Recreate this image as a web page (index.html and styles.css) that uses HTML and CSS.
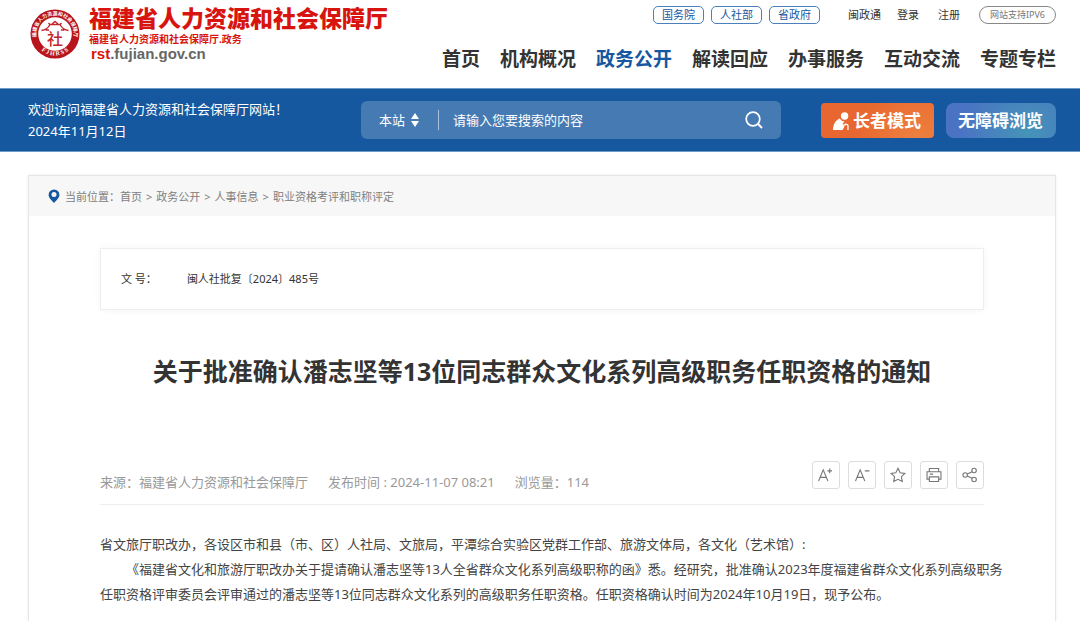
FILE: index.html
```html
<!DOCTYPE html>
<html lang="zh-CN">
<head>
    <meta charset="UTF-8">
    <meta name="viewport" content="width=device-width, initial-scale=1.0">
    <title>福建省人力资源和社会保障厅</title>
    <link rel="stylesheet" href="styles.css">
</head>
<body>
    <header class="header">
        <a class="logo" href="#">
            <svg class="logo-seal" viewBox="0 0 50 50" aria-hidden="true">
                <defs>
                    <path id="ringTop" d="M8.5 34A18.8 18.8 0 1 1 41.5 34"/>
                    <path id="ringBottom" d="M3.8 29A21.6 21.6 0 0 0 46.2 29"/>
                </defs>
                <circle cx="25" cy="25" r="24.5" fill="#b8141c"/>
                <circle cx="25" cy="25" r="16.8" fill="#fff"/>
                <text class="seal-ring"><textPath href="#ringTop" startOffset="50%" text-anchor="middle">福建省人力资源和社会保障厅</textPath></text>
                <text class="seal-latin"><textPath href="#ringBottom" startOffset="50%" text-anchor="middle">F J H R S S</textPath></text>
                <path d="M11.5 21.5Q17 21 20 15.5H30Q33 21 38.5 21.5M20 15.5L18.5 14M30 15.5L31.5 14M22 15L25 12.5L28 15M15.5 21H19M31 21H34.5" fill="none" stroke="#c0272d" stroke-width="1.4"/>
                <text class="seal-char" x="25" y="36" text-anchor="middle">社</text>
            </svg>
            <span class="logo-text">
                <span class="logo-name">福建省人力资源和社会保障厅</span>
                <span class="logo-sub">福建省人力资源和社会保障厅.政务</span>
                <span class="logo-url"><span class="red">rst</span>.fujian.gov.cn</span>
            </span>
        </a>
        <div class="header-right">
            <div class="top-links">
                <div class="gov-links">
                    <a href="#">国务院</a>
                    <a href="#">人社部</a>
                    <a href="#">省政府</a>
                </div>
                <a class="app-link" href="#">闽政通</a>
                <a class="login-link" href="#">登录</a>
                <a class="reg-link" href="#">注册</a>
                <span class="ipv6">网站支持IPV6</span>
            </div>
            <nav class="nav">
                <a href="#">首页</a>
                <a href="#">机构概况</a>
                <a class="active" href="#">政务公开</a>
                <a href="#">解读回应</a>
                <a href="#">办事服务</a>
                <a href="#">互动交流</a>
                <a href="#">专题专栏</a>
            </nav>
        </div>
    </header>

    <div class="banner">
        <div class="welcome">
            <p>欢迎访问福建省人力资源和社会保障厅网站！</p>
            <p>2024年11月12日</p>
        </div>
        <form class="search">
            <select class="search-scope" aria-label="搜索范围">
                <option>本站</option>
            </select>
            <svg class="sort-icon" viewBox="0 0 8 14" aria-hidden="true">
                <path d="M4 0L8 6H0ZM4 14L0 8H8Z" fill="#fff"/>
            </svg>
            <input class="search-input" type="text" placeholder="请输入您要搜索的内容" aria-label="搜索内容">
            <button class="search-btn" type="submit" aria-label="搜索">
                <svg viewBox="0 0 18 18" aria-hidden="true">
                    <circle cx="8" cy="8" r="6.8" fill="none" stroke="#fff" stroke-width="1.7"/>
                    <path d="M12.8 12.8L17 17" stroke="#fff" stroke-width="2"/>
                </svg>
            </button>
        </form>
        <div class="modes">
            <button class="mode elder" type="button">
                <svg viewBox="0 0 16 18" aria-hidden="true">
                    <circle cx="11.6" cy="4" r="3.7" fill="#fff"/>
                    <path d="M0 18C0 12.5 2.5 8 6.8 6.4C8 8.4 9.5 9.3 11.5 9.5L9.5 12L11.5 14.5L9.5 18Z" fill="#fff"/>
                    <path d="M9.5 13.3L13 12.6M11.8 12.2Q15 11.8 15 14V18" fill="none" stroke="#fff" stroke-width="1.3"/>
                </svg>
                长者模式
            </button>
            <button class="mode barrier-free" type="button">无障碍浏览</button>
        </div>
    </div>

    <main class="panel">
        <div class="breadcrumb">
            <svg class="pin" viewBox="0 0 12 14" aria-hidden="true">
                <path d="M6 0.5A5.4 5.4 0 0 1 11.4 6C11.4 9 8.5 11 6 14C3.5 11 0.6 9 0.6 6A5.4 5.4 0 0 1 6 0.5Z" fill="#16589f"/>
                <circle cx="6" cy="5.6" r="2.5" fill="#f7f7f7"/>
            </svg>
            <span>当前位置：</span>
            <a href="#">首页</a>
            <span class="sep">&gt;</span>
            <a href="#">政务公开</a>
            <span class="sep">&gt;</span>
            <a href="#">人事信息</a>
            <span class="sep">&gt;</span>
            <a href="#">职业资格考评和职称评定</a>
        </div>

        <article class="article">
            <dl class="doc-info">
                <dt>文 号：</dt>
                <dd>闽人社批复〔2024〕485号</dd>
            </dl>

            <h1>关于批准确认潘志坚等13位同志群众文化系列高级职务任职资格的通知</h1>

            <div class="meta">
                <div class="meta-text">
                    <span>来源：福建省人力资源和社会保障厅</span>
                    <span>发布时间 : 2024-11-07 08:21</span>
                    <span>浏览量：114</span>
                </div>
                <div class="tools">
                    <button type="button" aria-label="放大字号">
                        <svg viewBox="0 0 28 28"><path d="M6 20.5L11 8.5L16 20.5M7.8 16.5H14.2M15.5 9.5H20.5M18 7V12"/></svg>
                    </button>
                    <button type="button" aria-label="缩小字号">
                        <svg viewBox="0 0 28 28"><path d="M7 20.5L12 8.5L17 20.5M8.8 16.5H15.2M17 9.5H22"/></svg>
                    </button>
                    <button type="button" aria-label="收藏">
                        <svg viewBox="0 0 28 28"><path d="M14 6.8L16.3 11.5L21.4 12.2L17.7 15.8L18.6 21L14 18.6L9.4 21L10.3 15.8L6.6 12.2L11.7 11.5Z"/></svg>
                    </button>
                    <button type="button" aria-label="打印">
                        <svg viewBox="0 0 28 28"><path d="M9 10V7H19V10M9 18.5H6.5V10.5H21.5V18.5H19M9 16H19V21H9ZM9.5 13H13"/></svg>
                    </button>
                    <button type="button" aria-label="分享">
                        <svg viewBox="0 0 28 28"><circle cx="8.8" cy="14" r="2.4"/><circle cx="18.4" cy="9.2" r="2.4"/><circle cx="18.4" cy="18.8" r="2.4"/><path d="M11 13L16.2 10.4M11 15L16.2 17.6"/></svg>
                    </button>
                </div>
            </div>

            <div class="content">
                <p>省文旅厅职改办，各设区市和县（市、区）人社局、文旅局，平潭综合实验区党群工作部、旅游文体局，各文化（艺术馆）:</p>
                <p class="indent">《福建省文化和旅游厅职改办关于提请确认潘志坚等13人全省群众文化系列高级职称的函》悉。经研究，批准确认2023年度福建省群众文化系列高级职务<br>任职资格评审委员会评审通过的潘志坚等13位同志群众文化系列的高级职务任职资格。任职资格确认时间为2024年10月19日，现予公布。</p>
            </div>
        </article>
    </main>
</body>
</html>
```
FILE: styles.css
```css
* {
    box-sizing: border-box;
}
body {
    margin: 0;
    min-height: 100vh;
    display: flex;
    flex-direction: column;
    background-color: #fff;
    color: #333;
    font-family: "Noto Sans", "Noto Sans CJK SC", sans-serif;
    font-size: 13px;
}
a {
    color: inherit;
    text-decoration: none;
}
p, dl, dd {
    margin: 0;
}
button, input, select {
    font-family: inherit;
    padding: 0;
    border: none;
    background: none;
}
button {
    cursor: pointer;
}

/* header */
.header {
    display: flex;
    justify-content: space-between;
    padding: 0 24px 0 30px;
    min-height: 88px;
}
.logo {
    display: flex;
    align-items: flex-start;
    gap: 9px;
    padding-top: 4px;
    white-space: nowrap;
}
.logo-seal {
    width: 50px;
    height: 52px;
    margin-top: 4px;
}
.seal-ring {
    font-size: 5px;
    font-weight: bold;
    fill: #fff;
}
.seal-latin {
    font-family: "Liberation Serif", serif;
    font-size: 6px;
    font-weight: bold;
    fill: #fff;
}
.seal-char {
    font-size: 16px;
    font-weight: 500;
    fill: #c0272d;
}
.logo-text {
    display: flex;
    flex-direction: column;
}
.logo-name {
    color: #d7150e;
    font-family: "Noto Sans CJK SC", sans-serif;
    font-size: 23px;
    font-weight: 900;
    line-height: 26px;
}
.logo-sub {
    color: #d7150e;
    font-size: 10px;
    font-weight: bold;
    line-height: 18px;
}
.logo-url {
    padding-left: 2px;
    color: #666;
    font-family: "Liberation Sans", sans-serif;
    font-size: 15px;
    font-weight: bold;
    line-height: 12px;
}
.red {
    color: #d7150e;
}
.header-right {
    display: flex;
    flex-direction: column;
    align-items: flex-end;
    gap: 21px;
    padding-top: 6px;
}
.top-links {
    display: flex;
    align-items: center;
    font-size: 11px;
    line-height: 16px;
    white-space: nowrap;
}
.gov-links {
    display: flex;
    gap: 7px;
    margin-right: 28px;
}
.gov-links a {
    padding: 0 8px;
    border: 1px solid #4a80bb;
    border-radius: 5px;
    color: #16589f;
}
.app-link {
    margin-right: 16px;
}
.login-link, .reg-link {
    margin-right: 19px;
}
.ipv6 {
    padding: 0 10px;
    border: 1px solid #888;
    border-radius: 9px;
    color: #777;
    font-size: 9px;
}
.nav {
    display: flex;
    gap: 20px;
    font-size: 19px;
    font-weight: bold;
    line-height: 28px;
    white-space: nowrap;
}
.nav .active {
    color: #16589f;
}

/* blue bar */
.banner {
    display: flex;
    align-items: center;
    min-height: 64px;
    padding: 0 24px 0 28px;
    border-top: 1px solid #6f9ac5;
    border-bottom: 1px solid #6f9ac5;
    background-color: #16589f;
    color: #fff;
}
.welcome {
    flex: 1;
    line-height: 22px;
    white-space: nowrap;
}
.search {
    display: flex;
    align-items: center;
    flex: 0 1 420px;
    height: 38px;
    padding: 0 18px;
    border-radius: 6px;
    background-color: #457ab3;
}
.search-scope {
    appearance: none;
    width: 32px;
    color: #fff;
    font-size: 13px;
}
.sort-icon {
    width: 8px;
    height: 14px;
    margin-right: 19px;
}
.search-input {
    flex: 1;
    min-width: 0;
    height: 20px;
    padding-left: 14px;
    border-left: 1px solid #a9c3de;
    color: #fff;
    font-size: 13px;
}
.search-input::placeholder {
    color: #fff;
}
.search-btn svg {
    display: block;
    width: 18px;
    height: 18px;
}
.modes {
    display: flex;
    gap: 12px;
    margin-left: 40px;
}
.mode {
    display: flex;
    align-items: center;
    gap: 4px;
    height: 35px;
    padding: 0 13px 2px 12px;
    color: #fff;
    font-size: 17px;
    font-weight: bold;
    white-space: nowrap;
}
.mode svg {
    width: 16px;
    height: 18px;
    margin-top: 4px;
}
.elder {
    border-radius: 4px;
    background: radial-gradient(circle at 85% 110%, #ee8240, #e8662f 60%);
}
.barrier-free {
    border-radius: 8px;
    background: radial-gradient(circle at 75% 85%, #4594b8, #4a74c3 75%);
}

/* content panel */
.panel {
    flex: 1;
    margin: 23px 24px 0 28px;
    border: 1px solid #e6e6e6;
    border-bottom: none;
    box-shadow: 0 0 3px #eee;
}
.breadcrumb {
    display: flex;
    align-items: center;
    height: 40px;
    padding: 0 19px;
    background-color: #f7f7f7;
    color: #808080;
    font-size: 11px;
}
.pin {
    width: 12px;
    height: 14px;
    margin-right: 5px;
}
.sep {
    margin: 0 4px;
}
.article {
    padding: 32px 71px 0;
}
.doc-info {
    display: flex;
    gap: 30px;
    padding: 20px;
    border: 1px solid #eee;
    box-shadow: 0 0 8px #f5f5f5;
    font-size: 11px;
    line-height: 20px;
}
h1 {
    margin: 43px 0 72px;
    font-size: 25px;
    line-height: 36px;
    text-align: center;
}
.meta {
    display: flex;
    justify-content: space-between;
    align-items: flex-start;
    padding-bottom: 12px;
    border-bottom: 1px solid #eee;
}
.meta-text {
    display: flex;
    gap: 20px;
    padding-top: 11px;
    color: #999;
    line-height: 20px;
}
.tools {
    display: flex;
    gap: 8px;
}
.tools button {
    width: 28px;
    height: 28px;
    border: 1px solid #ddd;
    border-radius: 3px;
}
.tools svg {
    display: block;
    width: 26px;
    height: 26px;
    fill: none;
    stroke: #777;
    stroke-width: 1.2;
}
.content {
    padding-top: 27px;
    color: #444;
    line-height: 25px;
    white-space: nowrap;
}
.indent {
    text-indent: 2em;
}
```
